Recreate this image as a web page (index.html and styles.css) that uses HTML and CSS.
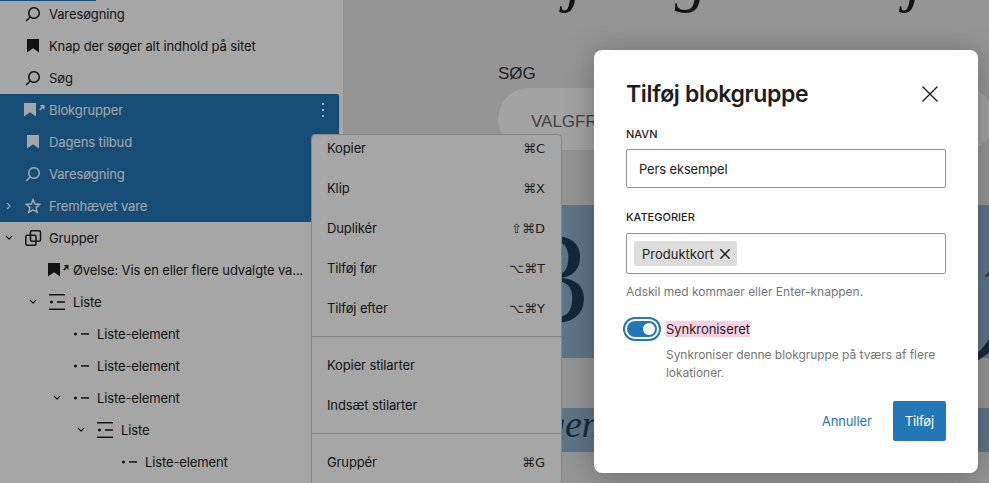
FILE: index.html
```html
<!DOCTYPE html>
<html>
<head>
  <title>Tilføj blokgruppe</title>
  <link rel="stylesheet" href="styles.css">
</head>
<body>
  <div class="editor">
    <div class="sidebar">
      <div class="tab-line"></div>
      <ul class="tree">
        <li class="row"><span class="chev"></span><svg class="ico" viewBox="0 0 24 24"><path d="M13 5c-3.3 0-6 2.7-6 6 0 1.4.5 2.7 1.3 3.7l-3.8 3.8 1.1 1.1 3.8-3.8c1 .8 2.3 1.3 3.6 1.3 3.3 0 6-2.7 6-6S16.300 5 13 5zm0 10.500c-2.500 0-4.500-2-4.500-4.500s2-4.500 4.500-4.500 4.500 2 4.500 4.500-2 4.500-4.500 4.500z"/></svg><span>Varesøgning</span></li>
        <li class="row"><span class="chev"></span><svg class="ico" viewBox="0 0 24 24"><path d="M6 5h12v13.500l-6-4.200-6 4.200z"/></svg><span>Knap der søger alt indhold på sitet</span></li>
        <li class="row"><span class="chev"></span><svg class="ico" viewBox="0 0 24 24"><path d="M13 5c-3.300 0-6 2.700-6 6 0 1.400.5 2.700 1.300 3.700l-3.800 3.800 1.100 1.100 3.800-3.800c1 .8 2.300 1.300 3.600 1.300 3.300 0 6-2.700 6-6S16.300 5 13 5zm0 10.500c-2.500 0-4.500-2-4.500-4.500s2-4.500 4.500-4.500 4.500 2 4.500 4.500-2 4.500-4.500 4.500z"/></svg><span>Søg</span></li>
        <li class="row sel first"><span class="chev"></span><svg class="ico" viewBox="0 0 24 24"><path d="M3 5h12v13.500l-6-4.200-6 4.200z"/><path d="M18.600 7h4.900v4.900l-1.700-1.700-2.400 2.400-1.200-1.200 2.400-2.400z"/></svg><span>Blokgrupper</span>
          <svg class="kebab" viewBox="0 0 24 24"><path d="M11 5h2v2h-2zM11 11h2v2h-2zM11 17h2v2h-2z"/></svg></li>
        <li class="row sel"><span class="chev"></span><svg class="ico" viewBox="0 0 24 24"><path d="M6 5h12v13.500l-6-4.200-6 4.200z"/></svg><span>Dagens tilbud</span></li>
        <li class="row sel"><span class="chev"></span><svg class="ico" viewBox="0 0 24 24"><path d="M13 5c-3.300 0-6 2.700-6 6 0 1.400.5 2.700 1.300 3.700l-3.800 3.800 1.100 1.100 3.800-3.800c1 .8 2.300 1.300 3.600 1.300 3.300 0 6-2.700 6-6S16.300 5 13 5zm0 10.500c-2.500 0-4.500-2-4.500-4.500s2-4.500 4.500-4.500 4.500 2 4.500 4.500-2 4.500-4.500 4.500z"/></svg><span>Varesøgning</span></li>
        <li class="row sel last"><span class="chev"><svg viewBox="0 0 24 24"><path d="M10 7.500l4.500 4.500-4.500 4.500-1.100-1.100 3.400-3.400-3.400-3.400z"/></svg></span><svg class="ico" viewBox="0 0 24 24"><path d="M12 5.600l1.900 4.400 4.800.4-3.600 3.200 1.100 4.700-4.200-2.500-4.200 2.500 1.100-4.700-3.600-3.200 4.800-.4z" fill="none" stroke="currentColor" stroke-width="1.500"/></svg><span>Fremhævet vare</span></li>
        <li class="row"><span class="chev"><svg viewBox="0 0 24 24"><path d="M7.500 10l4.500 4.500 4.500-4.500-1.100-1.100-3.400 3.400-3.400-3.400z"/></svg></span><svg class="ico" viewBox="0 0 24 24"><rect x="9.500" y="4.750" width="10" height="10.500" rx="1.500" fill="none" stroke="currentColor" stroke-width="1.500"/><rect x="4.750" y="9.250" width="10.250" height="10" rx="1.500" fill="none" stroke="currentColor" stroke-width="1.500"/></svg><span>Grupper</span></li>
        <li class="row d1"><span class="chev"></span><svg class="ico" viewBox="0 0 24 24"><path d="M3 5h12v13.500l-6-4.200-6 4.200z"/><path d="M18.600 7h4.900v4.900l-1.700-1.700-2.400 2.400-1.200-1.200 2.400-2.400z"/></svg><span>Øvelse: Vis en eller flere udvalgte va...</span></li>
        <li class="row d1"><span class="chev"><svg viewBox="0 0 24 24"><path d="M7.500 10l4.500 4.500 4.500-4.500-1.100-1.100-3.400 3.400-3.400-3.400z"/></svg></span><svg class="ico" viewBox="0 0 24 24"><path d="M4 4h16v1.500H4zM4 18.500h16V20H4zM12 11.200h8v1.500h-8z"/><circle cx="6.500" cy="12" r="1.500"/></svg><span>Liste</span></li>
        <li class="row d2"><span class="chev"></span><svg class="ico" viewBox="0 0 24 24"><path d="M12 11.200h8v1.500h-8z"/><circle cx="6.500" cy="12" r="1.500"/></svg><span>Liste-element</span></li>
        <li class="row d2"><span class="chev"></span><svg class="ico" viewBox="0 0 24 24"><path d="M12 11.200h8v1.500h-8z"/><circle cx="6.500" cy="12" r="1.500"/></svg><span>Liste-element</span></li>
        <li class="row d2"><span class="chev"><svg viewBox="0 0 24 24"><path d="M7.500 10l4.500 4.500 4.500-4.500-1.100-1.100-3.400 3.400-3.400-3.400z"/></svg></span><svg class="ico" viewBox="0 0 24 24"><path d="M12 11.200h8v1.500h-8z"/><circle cx="6.500" cy="12" r="1.500"/></svg><span>Liste-element</span></li>
        <li class="row d3"><span class="chev"><svg viewBox="0 0 24 24"><path d="M7.500 10l4.500 4.500 4.500-4.500-1.100-1.100-3.400 3.400-3.400-3.400z"/></svg></span><svg class="ico" viewBox="0 0 24 24"><path d="M4 4h16v1.500H4zM4 18.500h16V20H4zM12 11.200h8v1.500h-8z"/><circle cx="6.500" cy="12" r="1.500"/></svg><span>Liste</span></li>
        <li class="row d4"><span class="chev"></span><svg class="ico" viewBox="0 0 24 24"><path d="M12 11.200h8v1.500h-8z"/><circle cx="6.500" cy="12" r="1.500"/></svg><span>Liste-element</span></li>
      </ul>
    </div>

    <div class="canvas">
      <div class="script-line"><span class="s1">j</span><span class="s2">g</span><span class="s3">j</span></div>
      <div class="search-label">SØG</div>
      <div class="search-pill">VALGFRI</div>
      <div class="banner"><span class="big-num">3</span></div>
      <div class="banner-small"><span class="slogan">gen</span></div>
      <span class="swash">)</span>
      <span class="swash-mark">´</span>
    </div>

    <div class="menu">
      <div class="menu-group">
        <div class="menu-item"><span>Kopier</span><span class="keys">⌘C</span></div>
        <div class="menu-item"><span>Klip</span><span class="keys">⌘X</span></div>
        <div class="menu-item"><span>Duplikér</span><span class="keys">⇧⌘D</span></div>
        <div class="menu-item"><span>Tilføj før</span><span class="keys">⌥⌘T</span></div>
        <div class="menu-item"><span>Tilføj efter</span><span class="keys">⌥⌘Y</span></div>
      </div>
      <div class="menu-group">
        <div class="menu-item"><span>Kopier stilarter</span></div>
        <div class="menu-item"><span>Indsæt stilarter</span></div>
      </div>
      <div class="menu-group">
        <div class="menu-item"><span>Gruppér</span><span class="keys">⌘G</span></div>
      </div>
    </div>
  </div>

  <div class="scrim"></div>

  <div class="modal">
    <div class="modal-head">
      <h1>Tilføj blokgruppe</h1>
      <svg class="close" viewBox="0 0 24 24"><path d="M4.500 4.500l15 15M19.500 4.500l-15 15" fill="none" stroke="currentColor" stroke-width="1.400"/></svg>
    </div>
    <label class="field-label">Navn</label>
    <div class="input">Pers eksempel</div>
    <label class="field-label cat-label">Kategorier</label>
    <div class="input tokens">
      <span class="token">Produktkort<svg viewBox="0 0 24 24"><path d="M5 5l14 14M19 5L5 19" fill="none" stroke="currentColor" stroke-width="2.200"/></svg></span>
    </div>
    <p class="help">Adskil med kommaer eller Enter-knappen.</p>
    <div class="sync">
      <span class="toggle"><span class="track"><span class="thumb"></span></span></span>
      <div class="sync-text">
        <span class="sync-name">Synkroniseret</span>
        <p class="sync-help">Synkroniser denne blokgruppe på tværs af flere lokationer.</p>
      </div>
    </div>
    <div class="actions">
      <span class="cancel">Annuller</span>
      <span class="add">Tilføj</span>
    </div>
  </div>
</body>
</html>
```

FILE: styles.css
```css
html, body {
  height: 483px;
}
body {
  margin: 0;
  overflow: hidden;
  font-family: Inter, "Liberation Sans", sans-serif;
  font-size: 13px;
  letter-spacing: -0.12px;
  color: #1e1e1e;
  position: relative;
}
.editor {
  display: flex;
  height: 483px;
}
.sidebar {
  width: 343px;
  flex: none;
  background: #fff;
  border-right: 1px solid #e0e0e0;
  position: relative;
  overflow: hidden;
}
.tab-line {
  position: absolute;
  left: 0;
  top: 0;
  width: 96px;
  height: 1px;
  background: #2277b7;
}
.tree {
  list-style: none;
  margin: -2px 4px 0 0;
  padding: 0;
}
.row {
  display: flex;
  align-items: center;
  height: 32px;
  white-space: nowrap;
}
.d1 { padding-left: 24px; }
.d2 { padding-left: 48px; }
.d3 { padding-left: 72px; }
.d4 { padding-left: 96px; }
.row.sel {
  background: #2277b7;
  color: #fff;
}
.row.first { border-top-right-radius: 2px; }
.row.last { border-bottom-right-radius: 2px; }
.chev {
  width: 18px;
  height: 18px;
  margin-right: 3px;
  flex: none;
}
svg {
  fill: currentColor;
  display: block;
}
.chev svg {
  width: 18px;
  height: 18px;
}
.ico {
  width: 24px;
  height: 24px;
  margin-right: 4px;
  flex: none;
}
.kebab {
  width: 24px;
  height: 24px;
  margin-left: auto;
  margin-right: 4px;
}

/* page behind the dialog */
.canvas {
  flex: 1;
  background: #e5e5e5;
  position: relative;
  overflow: hidden;
  padding-left: 154px;
  letter-spacing: 0;
}
.script-line {
  display: flex;
  height: 118px;
  margin-top: -54px;
  font: italic 64px/64px "Liberation Serif", serif;
}
.s1 { margin-left: 68px; }
.s2 { margin-left: 91px; }
.s3 { margin-left: 199px; }
.search-label {
  font: 17px/20px "Liberation Sans", sans-serif;
  color: #333;
}
.search-pill {
  margin-top: 4px;
  width: 464px;
  height: 62px;
  padding-left: 33px;
  border-radius: 31px;
  background: #fafafa;
  font: 17px/68px "Liberation Sans", sans-serif;
  color: #666;
}
.banner {
  margin: 55px 0 0 -154px;
  height: 153px;
  padding-left: 180px;
  background: #8fb4d2;
  overflow: hidden;
}
.big-num {
  font: 130px/146px "Liberation Serif", serif;
  color: #1c3f5a;
}
.banner-small {
  margin: 50px 0 0 -154px;
  height: 44px;
  padding-left: 202px;
  background: #8fb4d2;
  overflow: hidden;
}
.slogan {
  font: italic 38px/32px "Liberation Serif", serif;
  color: #1c3f5a;
}
.swash {
  position: absolute;
  left: 628px;
  top: 190px;
  font: italic 170px/170px "Liberation Serif", serif;
  color: #1c3f5a;
}
.swash-mark {
  position: absolute;
  left: 636px;
  top: 266px;
  font: italic 40px/40px "Liberation Serif", serif;
  color: #1c3f5a;
}

.menu {
  position: absolute;
  left: 311px;
  top: 134px;
  width: 251px;
  height: 360px;
  box-sizing: border-box;
  background: #fff;
  border: 1px solid #ccc;
  border-radius: 4px;
  overflow: hidden;
}
.menu-group {
  padding: 8px 0;
  border-top: 1px solid #ccc;
}
.menu-group:first-child {
  border-top: none;
  margin-top: -15px;
}
.menu-item {
  display: flex;
  justify-content: space-between;
  align-items: center;
  height: 40px;
  padding: 0 16px 0 15px;
}
.keys {
  font-family: "DejaVu Sans", sans-serif;
  font-size: 13px;
  letter-spacing: 0;
  color: #333;
}
.scrim {
  position: absolute;
  inset: 0;
  background: rgba(0,0,0,0.35);
}

.modal {
  position: absolute;
  left: 594px;
  top: 50px;
  width: 384px;
  height: 423px;
  box-sizing: border-box;
  padding: 32px;
  background: #fff;
  border-radius: 8px;
  box-shadow: 0 3px 30px rgba(25,30,35,0.35);
}
.modal-head {
  display: flex;
  justify-content: space-between;
  align-items: center;
  height: 24px;
  margin-bottom: 20px;
}
h1 {
  margin: 0;
  font-size: 23px;
  font-weight: 600;
  letter-spacing: -0.35px;
}
.close {
  width: 24px;
  height: 24px;
  margin-right: 4px;
}
.field-label {
  display: block;
  font-size: 11px;
  font-weight: 500;
  line-height: 16px;
  letter-spacing: 0;
  text-transform: uppercase;
  margin-bottom: 7px;
}
.cat-label {
  margin-top: 21px;
  margin-bottom: 8px;
}
.input {
  height: 39px;
  box-sizing: border-box;
  border: 1px solid #949494;
  border-radius: 2px;
  padding: 0 12px;
  display: flex;
  align-items: center;
  letter-spacing: -0.15px;
}
.tokens {
  height: 41px;
  padding: 0 7px;
}
.token {
  display: flex;
  align-items: center;
  height: 25px;
  padding: 0 4px 0 8px;
  background: #ddd;
  border-radius: 2px;
  letter-spacing: 0;
}
.token svg {
  width: 16px;
  height: 16px;
  margin-left: 3px;
}
.help {
  margin: 9px 0 0;
  font-size: 12px;
  line-height: 18px;
  letter-spacing: 0;
  color: #757575;
}
.sync {
  display: flex;
  margin-top: 16px;
  margin-left: -3px;
}
.toggle {
  width: 38px;
  height: 24px;
  flex: none;
  box-sizing: border-box;
  border: 2px solid #2277b7;
  border-radius: 12px;
  padding: 2px;
  margin-right: 5px;
  background: #fff;
}
.track {
  display: flex;
  justify-content: flex-end;
  align-items: center;
  height: 16px;
  border-radius: 8px;
  background: #2277b7;
  padding-right: 2px;
}
.thumb {
  width: 12px;
  height: 12px;
  border-radius: 50%;
  background: #fff;
}
.sync-name {
  display: inline-block;
  margin-top: 4px;
  line-height: 16px;
  letter-spacing: -0.05px;
  background: #f9cfe3;
}
.sync-help {
  margin: 9px 0 0;
  font-size: 12px;
  line-height: 18px;
  letter-spacing: -0.05px;
  color: #757575;
}
.actions {
  display: flex;
  justify-content: flex-end;
  align-items: center;
  margin-top: 19px;
  gap: 21px;
}
.cancel {
  color: #2277b7;
}
.add {
  background: #2277b7;
  color: #fff;
  height: 40px;
  line-height: 40px;
  padding: 0 12px;
  border-radius: 2px;
}
```
